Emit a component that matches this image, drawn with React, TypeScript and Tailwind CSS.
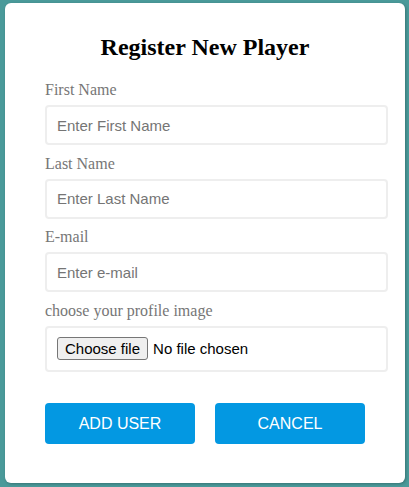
import React from "react";

const labelCls =
  "block text-[16px] leading-[18px] mb-[6px] text-[#767676] font-['Liberation_Serif','Times_New_Roman',serif]";
const inputCls =
  "block w-full h-[40px] border-2 border-[#eeeeee] rounded-[4px] bg-white pl-[10px] pr-[10px] text-[15px] text-black outline-none font-['Liberation_Sans',Arial,sans-serif] placeholder:text-[#757575]";

function Field({ label, placeholder }: { label: string; placeholder: string }) {
  return (
    <div>
      <label className={labelCls}>{label}</label>
      <input type="text" placeholder={placeholder} className={inputCls} />
    </div>
  );
}

export default function App() {
  return (
    <div className="w-[409px] h-[487px] bg-[#4a9a9a] pt-[3px] pl-[5px]">
      <div className="w-[400px] h-[480px] bg-white rounded-[6px] shadow-[1px_1px_3px_rgba(0,0,0,0.25)] pt-[30px]">
        <h2 className="text-center text-[24px] leading-[28px] font-bold text-black font-['Liberation_Serif','Times_New_Roman',serif]">
          Register New Player
        </h2>
        <div className="pl-[40px] pr-[17px] mt-[20px] flex flex-col gap-[9.67px]">
          <Field label="First Name" placeholder="Enter First Name" />
          <Field label="Last Name" placeholder="Enter Last Name" />
          <Field label="E-mail" placeholder="Enter e-mail" />
          <div>
            <label className={labelCls}>choose your profile image</label>
            <div className="h-[46px] border-2 border-[#eeeeee] rounded-[4px] flex items-center pl-[10px] font-['Liberation_Sans',Arial,sans-serif]">
              <button
                type="button"
                className="h-[23px] px-[7px] border border-[#767676] bg-[#efefef] rounded-[3px] text-[15px] leading-[21px] text-black"
              >
                Choose file
              </button>
              <span className="ml-[5px] text-[15px] text-black">No file chosen</span>
            </div>
          </div>
        </div>
        <div className="pl-[40px] mt-[31px] flex gap-[20px] font-['Liberation_Sans',Arial,sans-serif]">
          <button
            type="button"
            className="w-[150px] h-[41px] pt-[2px] rounded-[4px] bg-[#0398e2] text-white text-[16px]"
          >
            ADD USER
          </button>
          <button
            type="button"
            className="w-[150px] h-[41px] pt-[2px] rounded-[4px] bg-[#0398e2] text-white text-[16px]"
          >
            CANCEL
          </button>
        </div>
      </div>
    </div>
  );
}
